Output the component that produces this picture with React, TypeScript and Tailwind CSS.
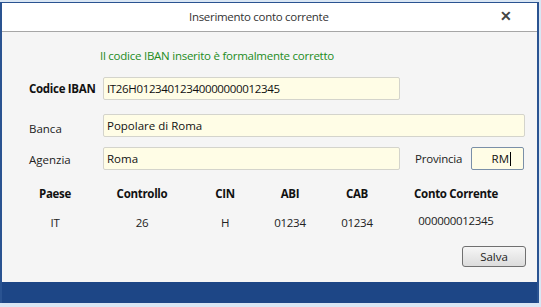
import React from "react";

const font = { fontFamily: '"Open Sans", "Noto Sans", sans-serif' };

function Field({ value, className }: { value: string; className: string }) {
  return (
    <div
      className={`h-[23px] border border-[#d4d4cc] bg-[#fffde6] px-[3px] flex items-center text-[11.5px] text-[#111] rounded-[2px] ${className}`}
    >
      {value}
    </div>
  );
}

const cols = [
  { head: "Paese", val: "IT", w: "w-[70px]" },
  { head: "Controllo", val: "26", w: "w-[104px]" },
  { head: "CIN", val: "H", w: "w-[62px]" },
  { head: "ABI", val: "01234", w: "w-[68px]" },
  { head: "CAB", val: "01234", w: "w-[66px]" },
  { head: "Conto Corrente", val: "000000012345", w: "w-[132px]" },
];

export default function App() {
  return (
    <div className="w-[541px] h-[307px] bg-[#d9e6f4] pt-[2px] overflow-hidden" style={font}>
      <div className="w-[539px] h-[301px] border-l-2 border-r-2 border-t border-[#2a5391] flex flex-col">
        {/* title bar */}
        <div className="h-[29px] bg-white border-b border-[#a6a6a6] flex items-center relative shrink-0">
          <span className="ml-[187px] text-[11.5px] text-[#333] tracking-[-0.3px]">Inserimento conto corrente</span>
          <span className="absolute right-[25px] top-[6px] text-[14px] font-bold text-[#444] leading-none">✕</span>
        </div>

        {/* body */}
        <div className="flex-1 bg-[#f5f5f5] flex flex-col">
          <div className="mt-[16px] ml-[98px] text-[11.5px] text-[#238c23] tracking-[-0.25px] leading-[16px]">
            Il codice IBAN inserito è formalmente corretto
          </div>

          <div className="mt-[13px] flex items-center">
            <span className="ml-[27px] w-[74px] text-[11.5px] font-bold text-[#111] tracking-[-0.3px]">Codice IBAN</span>
            <Field value="IT26H01234012340000000012345" className="w-[297px] tracking-[-0.35px]" />
          </div>

          <div className="mt-[14px] flex items-center">
            <span className="ml-[27px] w-[74px] text-[11.5px] text-[#222] mt-[6px]">Banca</span>
            <Field value="Popolare di Roma" className="w-[422px]" />
          </div>

          <div className="mt-[10px] flex items-center">
            <span className="ml-[27px] w-[74px] text-[11.5px] text-[#222] mt-[1px]">Agenzia</span>
            <Field value="Roma" className="w-[297px]" />
            <span className="ml-[15px] w-[56px] text-[11.5px] text-[#222] tracking-[-0.2px]">Provincia</span>
            <div className="h-[23px] w-[53px] border border-[#7a8fa8] bg-[#fffde6] flex items-center justify-end pr-[12px] text-[11.5px] text-[#111] rounded-[2px]">
              RM<span className="w-px h-[14px] bg-black ml-px" />
            </div>
          </div>

          <div className="mt-[16px] ml-[18px] flex">
            {cols.map((c) => (
              <div key={c.head} className={`${c.w} flex flex-col items-center`}>
                <span className="text-[11.5px] font-bold text-[#111] tracking-[-0.3px] leading-[16px]">{c.head}</span>
                <span
                  className={`text-[11.5px] text-[#222] tracking-[-0.3px] leading-[16px] ${
                    c.head === "Conto Corrente" ? "mt-[11px]" : "mt-[13px]"
                  }`}
                >
                  {c.val}
                </span>
              </div>
            ))}
          </div>

          <div className="mt-[15px] flex justify-end pr-[11px]">
            <button className="h-[21px] w-[64px] border border-[#707070] rounded-[3px] bg-gradient-to-b from-[#f6f6f6] to-[#dcdcdc] text-[11.5px] text-[#222]">
              Salva
            </button>
          </div>
        </div>

        {/* bottom bar */}
        <div className="h-[21px] bg-[#1d4686] shrink-0" />
      </div>
    </div>
  );
}
